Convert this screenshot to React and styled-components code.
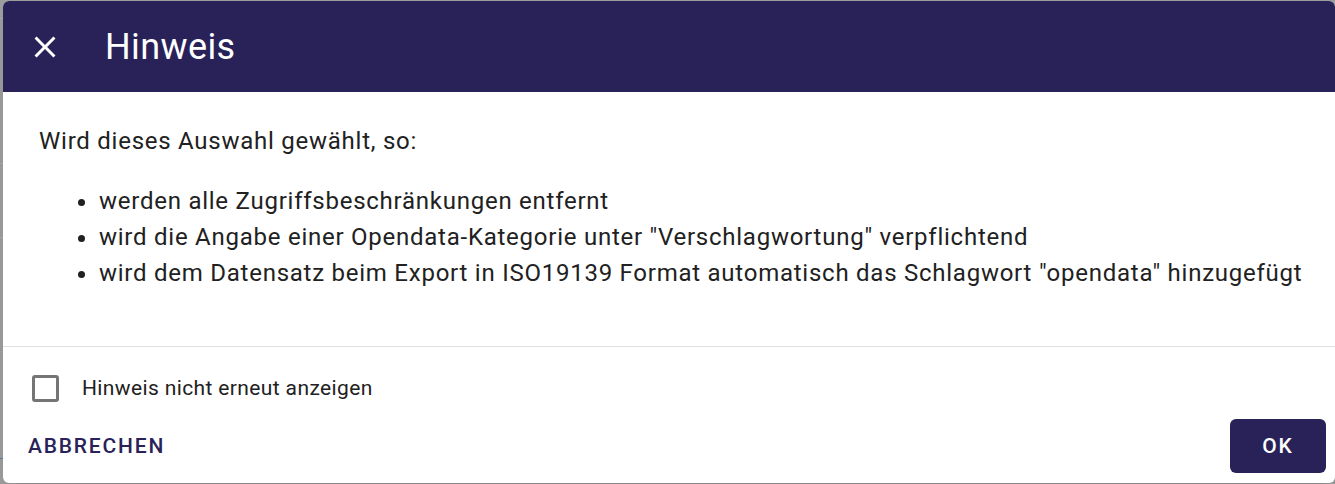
import React from 'react'
import styled, { createGlobalStyle } from 'styled-components'

const GlobalStyle = createGlobalStyle`
  html, body {
    margin: 0;
    padding: 0;
  }
  body {
    background: #9d9d9d;
    font-family: Roboto, "Noto Sans", "Liberation Sans", sans-serif;
    -webkit-font-smoothing: antialiased;
  }
`

const navy = '#282259'

const Page = styled.div`
  position: relative;
  height: 484px;
  overflow: hidden;
`

const PageRows = styled.div`
  display: flex;
  flex-direction: column;
`

const PageRow = styled.div`
  height: ${(p) => p.h}px;
  border-bottom: 1px solid ${(p) => p.line || '#a9a9a9'};
`

const Dialog = styled.div`
  position: absolute;
  top: 1px;
  left: 3px;
  right: 0;
  bottom: 1px;
  background: #fff;
  border-radius: 6px;
  overflow: hidden;
  display: flex;
  flex-direction: column;
  box-shadow: 0 11px 15px -7px rgba(0, 0, 0, 0.2);
`

const Header = styled.header`
  height: 91px;
  flex-shrink: 0;
  background: ${navy};
  display: flex;
  align-items: center;
  padding-left: 24px;
  gap: 42px;
`

const CloseButton = styled.button`
  width: 36px;
  height: 36px;
  padding: 0;
  border: none;
  background: transparent;
  color: #fff;
  display: flex;
  align-items: center;
  justify-content: center;
  cursor: pointer;
`

const Title = styled.h2`
  margin: 0;
  font-size: 36px;
  font-weight: 400;
  letter-spacing: 0.4px;
  color: #fff;
`

const Content = styled.div`
  flex-shrink: 0;
  padding: 31px 12px 31px 36px;
  font-size: 24px;
  line-height: 36px;
  letter-spacing: 0.75px;
  color: #212121;
  border-bottom: 1px solid #e0e0e0;
`

const Para = styled.p`
  margin: 0;
`

const List = styled.ul`
  margin: 24px 0;
  padding-left: 60px;
`

const CheckRow = styled.label`
  display: flex;
  align-items: center;
  height: 60px;
  margin-top: 11px;
  padding-left: 29px;
  gap: 23px;
  font-size: 21px;
  letter-spacing: 0.375px;
  color: #212121;
  cursor: pointer;
`

const Box = styled.span`
  width: 27px;
  height: 27px;
  box-sizing: border-box;
  border: 3px solid #757575;
  border-radius: 3px;
  flex-shrink: 0;
`

const Actions = styled.div`
  display: flex;
  justify-content: space-between;
  align-items: center;
  padding: 1px 9px 10px 13px;
`

const TextButton = styled.button`
  height: 54px;
  padding: 0 12px;
  border: none;
  background: transparent;
  color: ${navy};
  font-family: inherit;
  font-size: 21px;
  font-weight: 500;
  letter-spacing: 1.8px;
  text-transform: uppercase;
  cursor: pointer;
`

const PrimaryButton = styled(TextButton)`
  min-width: 96px;
  padding: 0 24px;
  background: ${navy};
  color: #fff;
  border-radius: 6px;
`

const CloseIcon = () => (
  <svg width="36" height="36" viewBox="0 0 24 24" fill="currentColor">
    <path d="M19 6.41 17.59 5 12 10.59 6.41 5 5 6.41 10.59 12 5 17.59 6.41 19 12 13.41 17.59 19 19 17.59 13.41 12z" />
  </svg>
)

const points = [
  'werden alle Zugriffsbeschränkungen entfernt',
  'wird die Angabe einer Opendata-Kategorie unter "Verschlagwortung" verpflichtend',
  'wird dem Datensatz beim Export in ISO19139 Format automatisch das Schlagwort "opendata" hinzugefügt',
]

export default function App() {
  return (
    <Page>
      <GlobalStyle />
      <PageRows>
        <PageRow h={18} />
        <PageRow h={144} />
        <PageRow h={73} />
        <PageRow h={220} line="#5b7fa6" />
      </PageRows>

      <Dialog role="dialog">
        <Header>
          <CloseButton aria-label="Schließen">
            <CloseIcon />
          </CloseButton>
          <Title>Hinweis</Title>
        </Header>

        <Content>
          <Para>Wird dieses Auswahl gewählt, so:</Para>
          <List>
            {points.map((text) => (
              <li key={text}>{text}</li>
            ))}
          </List>
        </Content>

        <CheckRow>
          <Box />
          Hinweis nicht erneut anzeigen
        </CheckRow>

        <Actions>
          <TextButton>Abbrechen</TextButton>
          <PrimaryButton>OK</PrimaryButton>
        </Actions>
      </Dialog>
    </Page>
  )
}
